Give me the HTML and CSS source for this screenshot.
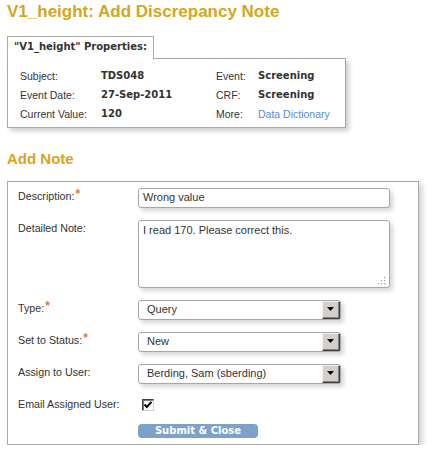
FILE: index.html
```html
<!DOCTYPE html>
<html>
<head>
<meta charset="utf-8">
<link rel="stylesheet" href="styles.css">
</head>
<body>
<h1 class="title">V1_height: Add Discrepancy Note</h1>

<div class="props">
  <div class="tab">"V1_height" Properties:</div>
  <div class="props-box">
    <span class="lbl">Subject:</span><span class="val">TDS048</span>
    <span class="lbl">Event:</span><span class="val">Screening</span>
    <span class="lbl">Event Date:</span><span class="val">27-Sep-2011</span>
    <span class="lbl">CRF:</span><span class="val">Screening</span>
    <span class="lbl">Current Value:</span><span class="val">120</span>
    <span class="lbl">More:</span><span class="link">Data Dictionary</span>
  </div>
</div>

<h2 class="subtitle">Add Note</h2>

<div class="form-box">
  <div class="flabel">Description:<span class="req">*</span></div>
  <div class="field input">Wrong value</div>

  <div class="flabel">Detailed Note:</div>
  <div class="field textarea">I read 170. Please correct this.
    <svg class="grip" width="10" height="10" viewBox="0 0 10 10">
      <rect x="8" y="2" width="1.2" height="1.2" fill="#9a9a9a"/>
      <rect x="5" y="5" width="1.2" height="1.2" fill="#9a9a9a"/>
      <rect x="8" y="5" width="1.2" height="1.2" fill="#9a9a9a"/>
      <rect x="2" y="8" width="1.2" height="1.2" fill="#9a9a9a"/>
      <rect x="5" y="8" width="1.2" height="1.2" fill="#9a9a9a"/>
      <rect x="8" y="8" width="1.2" height="1.2" fill="#9a9a9a"/>
    </svg>
  </div>

  <div class="flabel">Type:<span class="req">*</span></div>
  <div class="field select"><span class="sel-text">Query</span><span class="arrow"><svg width="8" height="5" viewBox="0 0 8 5"><path d="M0 0H7L3.5 4Z" fill="#000"/></svg></span></div>

  <div class="flabel">Set to Status:<span class="req">*</span></div>
  <div class="field select"><span class="sel-text">New</span><span class="arrow"><svg width="8" height="5" viewBox="0 0 8 5"><path d="M0 0H7L3.5 4Z" fill="#000"/></svg></span></div>

  <div class="flabel">Assign to User:</div>
  <div class="field select"><span class="sel-text">Berding, Sam (sberding)</span><span class="arrow"><svg width="8" height="5" viewBox="0 0 8 5"><path d="M0 0H7L3.5 4Z" fill="#000"/></svg></span></div>

  <div class="flabel">Email Assigned User:</div>
  <div class="check-cell"><span class="checkbox"><svg width="10" height="10" viewBox="0 0 10 10"><path d="M1.5 4.5L3.8 7L8.5 1.8" fill="none" stroke="#000" stroke-width="2"/></svg></span></div>

  <div></div>
  <div><span class="button">Submit &amp; Close</span></div>
</div>
</body>
</html>
```

FILE: styles.css
```css
html, body {
  margin: 0;
  padding: 0;
  background: #fff;
}
body {
  padding: 0 7px;
  font-family: "Liberation Sans", Arial, sans-serif;
  color: #333;
}
.title {
  margin: 2px 0 0;
  font: bold 17px/20px "Liberation Sans", Arial, sans-serif;
  color: #d5a621;
}
.props {
  margin-top: 14px;
  width: 339px;
}
.tab {
  display: inline-block;
  position: relative;
  z-index: 1;
  background: #fff;
  border: 1px solid #a9a9a9;
  border-bottom: none;
  padding: 3px 6px 5px;
  margin-bottom: -1px;
  font: bold 10px/14px "DejaVu Sans", sans-serif;
  color: #333;
}
.props-box {
  border: 1px solid #a9a9a9;
  box-shadow: 3px 3px 5px rgba(0, 0, 0, 0.2);
  padding: 7px 12px 4px;
  display: grid;
  grid-template-columns: 81px 115px 42px auto;
  grid-auto-rows: 19px;
  align-items: center;
}
.lbl {
  font-size: 10.5px;
  color: #333;
}
.val {
  font: bold 10px "DejaVu Sans", sans-serif;
  color: #333;
}
.link {
  font-size: 10.5px;
  color: #5a8ec8;
}
.subtitle {
  margin: 22px 0 0;
  font: bold 15px/18px "Liberation Sans", Arial, sans-serif;
  color: #d5a621;
}
.form-box {
  margin-top: 13px;
  width: 390px;
  border: 1px solid #a9a9a9;
  box-shadow: 3px 3px 6px rgba(0, 0, 0, 0.2);
  padding: 6px 10px 6px;
  display: grid;
  grid-template-columns: 120px auto;
  row-gap: 12px;
  align-items: start;
  font-size: 11px;
}
.flabel {
  padding-top: 1px;
  line-height: 14px;
  font-size: 10.7px;
  color: #333;
}
.req {
  color: #e8782a;
  font-weight: bold;
  font-size: 12px;
  vertical-align: top;
  position: relative;
  top: -2px;
  margin-left: 1px;
}
.field {
  box-sizing: border-box;
  border: 1px solid #a6a6a6;
  border-radius: 3px;
  background: #fff;
  box-shadow: 3px 3px 4px rgba(0, 0, 0, 0.16);
  color: #333;
}
.input {
  width: 252px;
  height: 20px;
  line-height: 17px;
  padding-left: 4px;
}
.textarea {
  position: relative;
  width: 252px;
  height: 68px;
  line-height: 14px;
  padding: 2px 4px;
}
.grip {
  position: absolute;
  right: 3px;
  bottom: 2px;
}
.select {
  width: 203px;
  height: 20px;
  display: flex;
  align-items: stretch;
  padding: 0 0 0 8px;
}
.sel-text {
  flex: 1;
  line-height: 17px;
}
.arrow {
  box-sizing: border-box;
  width: 18px;
  background: #d4d0c8;
  border-top: 1px solid #f4f3ef;
  border-left: 1px solid #f4f3ef;
  border-right: 1px solid #404040;
  border-bottom: 1px solid #404040;
  box-shadow: inset -1px -1px 0 #808080;
  display: flex;
  align-items: center;
  justify-content: center;
  padding-bottom: 1px;
}
.arrow svg {
  display: block;
}
.check-cell {
  height: 16px;
  padding-top: 3px;
  padding-left: 4px;
  box-sizing: border-box;
}
.checkbox {
  box-sizing: border-box;
  display: flex;
  align-items: center;
  justify-content: center;
  width: 12px;
  height: 12px;
  background: #fff;
  border-top: 1px solid #404040;
  border-left: 1px solid #404040;
  border-right: 1px solid #d4d0c8;
  border-bottom: 1px solid #d4d0c8;
  box-shadow: inset 1px 1px 0 #808080;
}
.checkbox svg {
  display: block;
}
.button {
  display: block;
  width: 120px;
  height: 14px;
  border-radius: 4px;
  background: #7da1c9;
  color: #fff;
  text-align: center;
  font: bold 10px/14px "DejaVu Sans", sans-serif;
}
```
